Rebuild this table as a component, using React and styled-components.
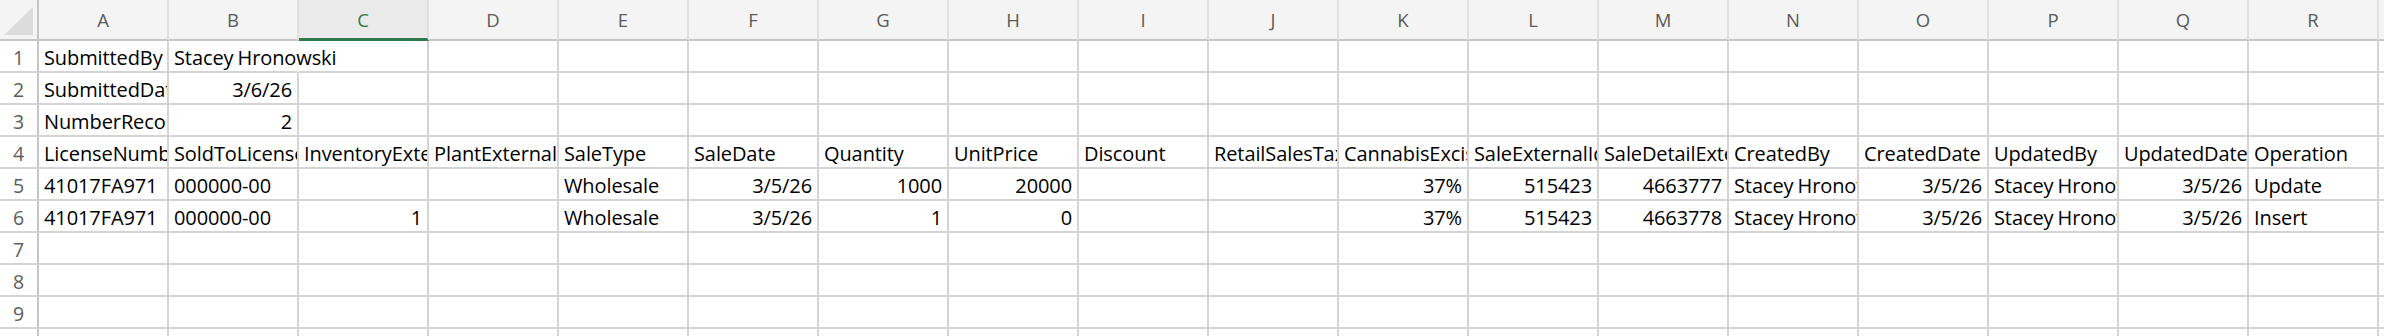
import React from "react";
import styled, { createGlobalStyle } from "styled-components";

const GlobalStyle = createGlobalStyle`
  html, body {
    margin: 0;
    padding: 0;
    background: #ffffff;
  }
  body {
    font-family: "Open Sans", "Liberation Sans", sans-serif;
    color: #000000;
  }
`;

const COLS = "ABCDEFGHIJKLMNOPQR".split("");
const ACTIVE_COL = "C";
const ROW_COUNT = 10;

// sheet contents, one array per row; { v, spill } lets text run over an empty neighbour
const data = [
  ["SubmittedBy", { v: "Stacey Hronowski", spill: true }],
  ["SubmittedDate", "3/6/26"],
  ["NumberRecords", "2"],
  [
    "LicenseNumber",
    "SoldToLicenseNumber",
    "InventoryExternalId",
    "PlantExternalId",
    "SaleType",
    "SaleDate",
    "Quantity",
    "UnitPrice",
    "Discount",
    "RetailSalesTax",
    "CannabisExciseTax",
    "SaleExternalId",
    "SaleDetailExternalId",
    "CreatedBy",
    "CreatedDate",
    "UpdatedBy",
    "UpdatedDate",
    "Operation",
  ],
  [
    "41017FA971",
    "000000-00",
    "",
    "",
    "Wholesale",
    "3/5/26",
    "1000",
    "20000",
    "",
    "",
    "37%",
    "515423",
    "4663777",
    "Stacey Hronowski",
    "3/5/26",
    "Stacey Hronowski",
    "3/5/26",
    "Update",
  ],
  [
    "41017FA971",
    "000000-00",
    "1",
    "",
    "Wholesale",
    "3/5/26",
    "1",
    "0",
    "",
    "",
    "37%",
    "515423",
    "4663778",
    "Stacey Hronowski",
    "3/5/26",
    "Stacey Hronowski",
    "3/5/26",
    "Insert",
  ],
];

const isNumber = (v) => /^[\d/%.]+$/.test(v);

const Sheet = styled.div`
  display: grid;
  grid-template-columns: 39px repeat(${COLS.length}, 130px) 1fr;
  grid-template-rows: 41px;
  grid-auto-rows: 32px;
  width: 100vw;
  height: 336px;
  overflow: hidden;
`;

const Corner = styled.div`
  position: relative;
  background: #f4f4f4;
  border-right: 2px solid #c6c6c6;
  border-bottom: 2px solid #c6c6c6;
  box-sizing: border-box;

  &::after {
    content: "";
    position: absolute;
    left: 4px;
    top: 7px;
    width: 29px;
    height: 28px;
    background: #dcdcdc;
    clip-path: polygon(100% 0, 100% 100%, 0 100%);
  }
`;

const ColHeader = styled.div`
  box-sizing: border-box;
  background: ${(p) => (p.$active ? "#eaeaea" : "#f4f4f4")};
  border-right: 2px solid #e0e0e0;
  border-bottom: ${(p) => (p.$active ? "3px solid #2f7a4b" : "2px solid #c6c6c6")};
  color: ${(p) => (p.$active ? "#2f7a4b" : "#5a5a5a")};
  font-size: 18.5px;
  line-height: 38px;
  padding-top: 1px;
  text-align: center;
`;

const RowHeader = styled.div`
  box-sizing: border-box;
  border-right: 2px solid #c6c6c6;
  border-bottom: 2px solid #d4d4d4;
  color: #5e5e5e;
  font-size: 19.5px;
  line-height: 27px;
  padding-top: 3px;
  text-align: center;
`;

const Cell = styled.div`
  box-sizing: border-box;
  border-right: 2px solid ${(p) => (p.$spill ? "transparent" : "#d4d4d4")};
  border-bottom: 2px solid #d4d4d4;
  padding: 3px 5px 0 5px;
  font-size: 20px;
  line-height: 27px;
  white-space: nowrap;
  overflow: ${(p) => (p.$spill ? "visible" : "hidden")};
  text-align: ${(p) => (p.$num ? "right" : "left")};
  letter-spacing: -0.1px;
  word-spacing: -1px;
`;

const App = () => {
  const rows = Array.from({ length: ROW_COUNT }, (_, r) => data[r] || []);

  return (
    <>
      <GlobalStyle />
      <Sheet>
        <Corner />
        {COLS.map((c) => (
          <ColHeader key={c} $active={c === ACTIVE_COL}>
            {c}
          </ColHeader>
        ))}
        <ColHeader />

        {rows.map((row, r) => (
          <React.Fragment key={r}>
            <RowHeader>{r + 1}</RowHeader>
            {COLS.map((c, i) => {
              const raw = row[i];
              const cell = typeof raw === "object" && raw ? raw : { v: raw || "" };
              return (
                <Cell key={c} $num={isNumber(cell.v)} $spill={cell.spill}>
                  {cell.v}
                </Cell>
              );
            })}
            <Cell />
          </React.Fragment>
        ))}
      </Sheet>
    </>
  );
};

export default App;
